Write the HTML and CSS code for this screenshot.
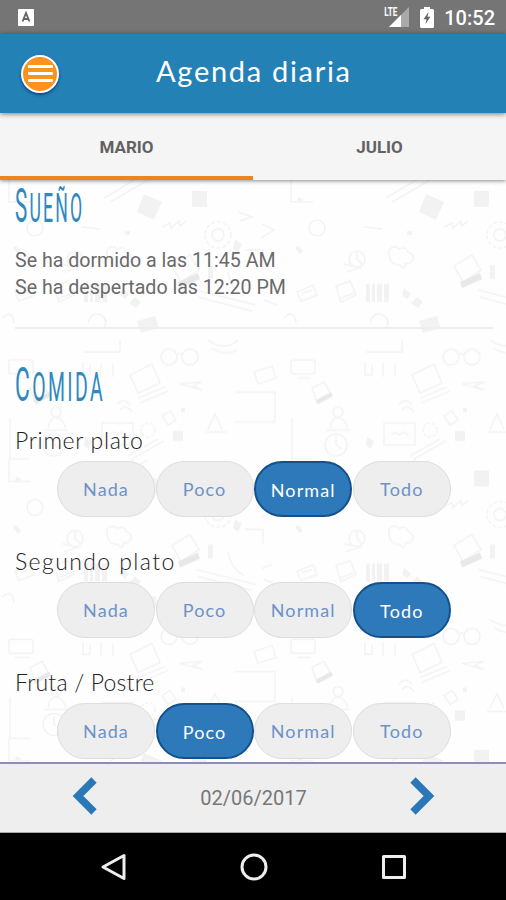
FILE: index.html
```html
<!DOCTYPE html>
<html lang="es">
<head>
  <meta charset="UTF-8">
  <meta name="viewport" content="width=device-width, initial-scale=1.0">
  <title>Agenda diaria</title>
  <link rel="stylesheet" href="styles.css">
</head>
<body>

  <div class="status-bar">
    <svg class="app-icon" width="16" height="17" viewBox="0 0 16 17">
      <rect width="16" height="17" rx="1" fill="#fff"/>
      <path d="M4.600 12.500 8 4l3.400 8.500M5.800 10h4.400" fill="none" stroke="#666" stroke-width="1.900"/>
    </svg>
    <div class="status-right">
      <span class="lte">LTE</span>
      <svg class="signal" width="20" height="20" viewBox="0 0 20 20">
        <path d="M20 0v20H0z" fill="#a9a9a9"/>
        <path d="M12 8v12H0z" fill="#fff"/>
      </svg>
      <svg class="battery" width="14" height="21" viewBox="0 0 14 21">
        <path d="M4 0h6v2h2.500q1.500 0 1.500 1.500v16q0 1.500-1.500 1.500h-11q-1.500 0-1.500-1.500v-16q0-1.500 1.500-1.500H4z" fill="#fff"/>
        <path d="M8.500 5 3.500 12.300h3L5.500 17l5-7.200h-3z" fill="#666"/>
      </svg>
      <span class="clock">10:52</span>
    </div>
  </div>

  <header class="header">
    <button class="menu-btn" type="button" aria-label="Menú">
      <span></span>
      <span></span>
      <span></span>
    </button>
    <h1>Agenda diaria</h1>
  </header>

  <nav class="tabs">
    <a class="tab active">MARIO</a>
    <a class="tab">JULIO</a>
  </nav>

  <main class="content">
    <!-- school doodles behind the text -->
    <svg class="doodles" width="506" height="582">
      <defs>
        <pattern id="doodle" width="282" height="279.500" patternUnits="userSpaceOnUse">
          <g fill="none" stroke="#f3f3f3" stroke-width="1.500">
            <path d="M9 0v22h22M104 18l30-18M110 22l38-22M82 47l18 2M162 47l8-4 1 5 8-7 1 5 6-5"/>
            <path d="M196 110l60 15M198 117l54 14M228 92q3 18 16 24M62 84l16 4-14 4"/>
            <circle cx="35" cy="48" r="8"/>
            <circle cx="218" cy="55" r="13" stroke-dasharray="4 2"/>
            <circle cx="218" cy="55" r="6"/>
            <circle cx="75" cy="79" r="8"/>
            <path d="M75 79v-7M75 79l5 5"/>
            <path d="M107 70q5-6 10-1 8-3 9 3 8 3 4 9-3 4-6 2-2 8-6 2-12 0-11-15z"/>
            <path d="M172 86l18-11 9 15-18 12z"/>
            <path d="M54 106l14-5 6 14-15 7zM57 119l15-6"/>
            <path d="M15 112l16-7 4 10-16 6zM20 113l10-3"/>
            <path d="M88 143q3-12 13-8 8 5 3 13M2 138q10-10 12 5"/>
            <path d="M84 172h36v-12"/>
            <circle cx="169" cy="177" r="8"/>
            <circle cx="190" cy="177" r="8"/>
            <path d="M177 175q3-3 5 0M208 160q18 12 30 0M212 168q14 9 25 2"/>
            <rect x="9" y="180" width="24" height="14" rx="2"/>
            <path d="M15 198h14"/>
            <path d="M83 182v13h7v-10M101 183v14M113 184v13"/>
            <path d="M130 195l22-11 8 19-22 10zM138 218l27-11M140 223l28-12"/>
            <path d="M180 204l22-2-9 4 9 4z"/>
            <path d="M30 208l12-6 7 12-14 9z"/>
            <path d="M44 250h24M48 248q2-11 8-10 6-1 10 10"/>
            <circle cx="56" cy="232" r="5"/>
            <rect x="102" y="243" width="31" height="22"/>
            <path d="M109 255l4-3 4 3 4-3 6 3"/>
            <path d="M117 225q6-9 13 0M120 230q6-7 12 2"/>
            <circle cx="148" cy="250" r="7" stroke-dasharray="3 2"/>
            <path d="M162 236l8-5 6 9-8 5zM205 252h22M208 249l7-15 7 15"/>
            <circle cx="54" cy="265" r="11"/>
            <path d="M54 265v-8M54 265l6 4"/>
            <path d="M132 279l32-18M128 276l30-17M10 238v41h20"/>
            <path d="M235 212h40v30h-40M254 192l18-6 4 12-18 6z"/>
            <path d="M238 32l14 5-12 4M262 44l12 6-13 8M245 70h18v14"/>
            <path d="M262 109l10-4M264 120l13 5"/>
          </g>
          <g fill="#f2f2f2">
            <path d="M144 14l18 8-8 18-17-8z"/>
            <rect x="192" y="11" width="15" height="16"/>
            <rect x="125" y="51" width="5" height="4"/>
            <path d="M178 102l20-9 2 6-20 9z" fill="#e8e8e8"/>
            <path d="M84 104h4v18h-4zM90 104h3v18h-3zM95 104h5v18h-5zM102 104h5v18h-5z"/>
            <path d="M135 117l6 5-5 6-7-5zM16 66l5 5-3 3-5-6zM137 141l18-5 4 12-18 5z"/>
            <path d="M34 220l15-8 2 4-15 8z" fill="#e8e8e8"/>
            <path d="M173 251h10v10h-10zM181 228h4v4h-4zM208 85h5v14h-5zM235 60l7 4-4 8-5-3z"/>
            <path d="M85 257l7 4-3 8-5-3zM16 17l6 3-7 2zM122 108l7 6-4 5-5-4z"/>
          </g>
        </pattern>
      </defs>
      <rect width="506" height="582" fill="url(#doodle)"/>
    </svg>

    <section class="block sleep">
      <h2><span class="hand sueno">Sueño</span></h2>
      <p>Se ha dormido a las 11:45 AM</p>
      <p>Se ha despertado las 12:20 PM</p>
    </section>

    <hr>

    <section class="block meals">
      <h2><span class="hand comida">Comida</span></h2>

      <h3 class="primer">Primer plato</h3>
      <div class="options">
        <button type="button">Nada</button>
        <button type="button">Poco</button>
        <button type="button" class="selected">Normal</button>
        <button type="button">Todo</button>
      </div>

      <h3 class="segundo">Segundo plato</h3>
      <div class="options">
        <button type="button">Nada</button>
        <button type="button">Poco</button>
        <button type="button">Normal</button>
        <button type="button" class="selected">Todo</button>
      </div>

      <h3 class="postre">Fruta / Postre</h3>
      <div class="options">
        <button type="button">Nada</button>
        <button type="button" class="selected">Poco</button>
        <button type="button">Normal</button>
        <button type="button">Todo</button>
      </div>
    </section>
  </main>

  <footer class="date-bar">
    <svg width="26" height="38" viewBox="0 0 26 38">
      <path d="M22 3 6 19l16 16" fill="none" stroke="#2b78b8" stroke-width="7.500"/>
    </svg>
    <span>02/06/2017</span>
    <svg width="26" height="38" viewBox="0 0 26 38">
      <path d="M4 3l16 16L4 35" fill="none" stroke="#2b78b8" stroke-width="7.500"/>
    </svg>
  </footer>

  <div class="nav-bar">
    <svg width="28" height="28" viewBox="0 0 28 28"><path d="M25 2.500v23L4 14z"/></svg>
    <svg width="28" height="28" viewBox="0 0 28 28"><circle cx="14" cy="14" r="12"/></svg>
    <svg width="28" height="28" viewBox="0 0 28 28"><rect x="3.500" y="3.500" width="21" height="21"/></svg>
  </div>

</body>
</html>
```
FILE: styles.css
```css
* {
  box-sizing: border-box;
}

body {
  margin: 0;
  height: 900px;
  display: flex;
  flex-direction: column;
  overflow: hidden;
  font-family: Roboto, sans-serif;
  background: #fff;
  color: #6a6a6a;
}

h1, h2, h3, p {
  margin: 0;
  font-weight: normal;
}

button {
  padding: 0;
  font-family: Lato, sans-serif;
}

svg {
  display: block;
}

.status-bar {
  height: 34px;
  flex: none;
  display: flex;
  align-items: center;
  justify-content: space-between;
  padding: 0 11px 0 18px;
  background: #757575;
  color: #fff;
}

.status-right {
  display: flex;
  align-items: center;
}

.lte {
  font-size: 12px;
  font-weight: 700;
  line-height: 12px;
  transform: scaleX(0.68);
  transform-origin: right center;
  margin: -11px -8px 0 0;
}

.signal {
  margin-right: 11px;
}

.battery {
  margin-right: 10px;
}

.clock {
  font-size: 20px;
  font-weight: 500;
  line-height: 34px;
  margin-top: 2px;
}

.header {
  height: 79px;
  flex: none;
  display: flex;
  align-items: center;
  padding-left: 21px;
  background: #2381b6;
  box-shadow: 0 1px 5px rgba(0, 0, 0, 0.5);
  z-index: 3;
}

.menu-btn {
  width: 38px;
  height: 38px;
  display: flex;
  flex-direction: column;
  align-items: center;
  justify-content: center;
  gap: 4px;
  border: 2px solid #fff;
  border-radius: 50%;
  background: #fd931f;
  box-shadow: 0 2px 3px rgba(0, 30, 100, 0.6);
}

.menu-btn span {
  width: 25px;
  height: 3px;
  border-radius: 1px;
  background: #fff;
}

.header h1 {
  margin: -6px 0 0 97px;
  font-family: Lato, sans-serif;
  font-size: 29px;
  letter-spacing: 1.7px;
  color: #fff;
}

.tabs {
  height: 67px;
  flex: none;
  display: flex;
  background: #f5f5f5;
  box-shadow: 0 1px 4px rgba(0, 0, 0, 0.45);
  z-index: 2;
}

.tab {
  flex: 1;
  padding-top: 4px;
  border-bottom: 4px solid transparent;
  font-size: 17px;
  font-weight: 700;
  line-height: 60px;
  text-align: center;
  color: #626262;
}

.tab.active {
  border-bottom-color: #ee8420;
}

.content {
  position: relative;
  height: 582px;
  flex: none;
  background: #fefefe;
}

.doodles {
  position: absolute;
  top: 0;
  left: 0;
}

.block {
  position: relative;
  padding-left: 15px;
}

/* tall narrow handwritten style titles */
.block h2 {
  height: 67px;
  padding-top: 1px;
  line-height: 50px;
  color: #3088c0;
}

.hand {
  display: inline-block;
  font-size: 41px;
  font-weight: 400;
  text-transform: uppercase;
  transform-origin: left center;
}

.hand::first-letter {
  font-size: 48px;
}

.sueno {
  letter-spacing: 5px;
  transform: scaleX(0.43);
}

.comida {
  letter-spacing: 5px;
  transform: scaleX(0.475);
}

.block p {
  font-size: 19.6px;
  line-height: 27px;
}

hr {
  position: relative;
  margin: 26px 13px 0 15px;
  border: 0;
  border-top: 2px solid #eee;
}

.meals h2 {
  height: 98px;
  padding-top: 31px;
}

.block h3 {
  height: 34px;
  font-family: Lato, sans-serif;
  font-size: 23px;
  font-weight: 300;
  line-height: 27px;
  color: #222;
}

.primer {
  letter-spacing: 0.7px;
}

.segundo {
  letter-spacing: 1.4px;
}

.postre {
  letter-spacing: 0.2px;
}

.options {
  display: flex;
  gap: 0.6px;
  margin: 0 0 31px 42px;
}

.options button {
  width: 98px;
  height: 56px;
  border: 1px solid #ddd;
  border-radius: 28px;
  background: #eee;
  font-size: 18px;
  letter-spacing: 1.1px;
  color: #6d92c8;
}

.options .selected {
  padding-top: 1px;
  border: 2px solid #14508c;
  background: #2e79b9;
  color: #fff;
}

.date-bar {
  height: 71px;
  flex: none;
  display: flex;
  align-items: center;
  justify-content: space-between;
  padding: 0 71px 0 72px;
  border-top: 2px solid #8b8fb5;
  border-bottom: 1px solid #aaa;
  background: #eee;
  font-size: 20px;
  color: #777;
  z-index: 1;
}

.date-bar svg {
  margin-bottom: 4px;
}

.nav-bar {
  height: 67px;
  flex: none;
  display: flex;
  align-items: center;
  justify-content: space-between;
  padding: 0 98px 0 99px;
  background: #000;
}

.nav-bar svg {
  fill: none;
  stroke: #eee;
  stroke-width: 3;
  stroke-linejoin: round;
}
```
